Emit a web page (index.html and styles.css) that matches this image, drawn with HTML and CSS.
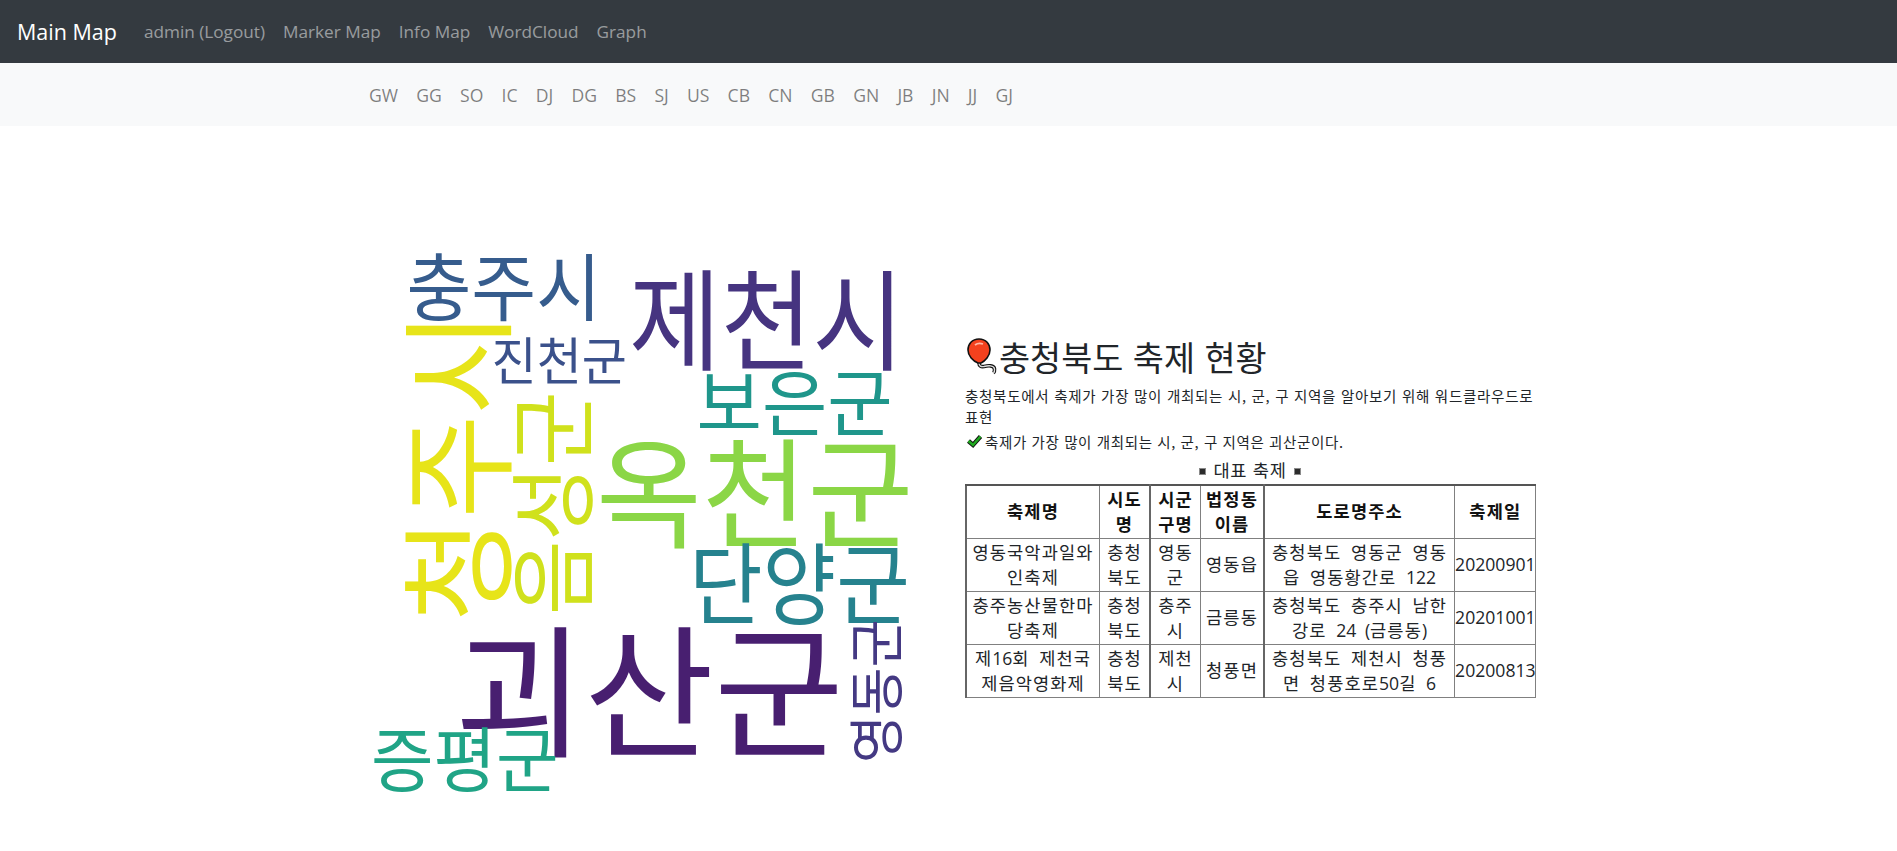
FILE: index.html
```html
<!DOCTYPE html>
<html lang="ko">
<head>
<meta charset="utf-8">
<title>WordCloud</title>
<link rel="stylesheet" href="styles.css">
</head>
<body>
<nav class="topbar">
  <a class="brand" href="#">Main Map</a>
  <a class="toplink" href="#">admin (Logout)</a>
  <a class="toplink" href="#">Marker Map</a>
  <a class="toplink" href="#">Info Map</a>
  <a class="toplink" href="#">WordCloud</a>
  <a class="toplink" href="#">Graph</a>
</nav>
<nav class="subbar">
  <a href="#">GW</a><a href="#">GG</a><a href="#">SO</a><a href="#">IC</a><a href="#">DJ</a><a href="#">DG</a><a href="#">BS</a><a href="#">SJ</a><a href="#">US</a><a href="#">CB</a><a href="#">CN</a><a href="#">GB</a><a href="#">GN</a><a href="#">JB</a><a href="#">JN</a><a href="#">JJ</a><a href="#">GJ</a>
</nav>
<main class="content">
  <svg class="cloud" viewBox="360 196 600 640" width="600" height="640" role="img" aria-label="word cloud">
    <text class="w" fill="#365c8d" transform="translate(406.5 315) scale(.705 .74)">충주시</text>
    <text class="w" fill="#463480" transform="translate(629 362) scale(.997 1.1)">제천시</text>
    <text class="w" fill="#3b518b" transform="translate(491.6 379.5) scale(.49 .51)">진천군</text>
    <text class="w" fill="#1f968b" transform="translate(696.6 430) scale(.71 .73)">보은군</text>
    <text class="w" fill="#8bd646" transform="translate(596 539) scale(1.15 1.2)">옥천군</text>
    <text class="w" fill="#26828e" transform="translate(689 617) scale(.8 .89)">단양군</text>
    <text class="w" fill="#481f70" transform="translate(454.5 746) scale(1.41 1.43)">괴산군</text>
    <text class="w" fill="#20a486" transform="translate(371 786) scale(.68 .71)">증평군</text>
    <text class="w" fill="#e7e419" transform="translate(502 622) rotate(-90) scale(1.126 1.16)">청주시</text>
    <text class="w" fill="#d0e11c" transform="translate(585.5 615) rotate(-90) scale(.81 .87)">음성군</text>
    <text class="w" fill="#443983" transform="translate(897 763) rotate(-90) scale(.52 .56)">영동군</text>
  </svg>
  <section class="info">
    <h2 class="title">
      <svg class="balloon" viewBox="5 7 36 44" width="36" height="44" aria-hidden="true">
        <path d="M19 35C19 38 21 39 24 38.5C28 37.5 34 37 34.5 41C34.7 43 34 44.5 33.5 45" fill="none" stroke="#111" stroke-width="3.6"/>
        <path d="M19 35C19 38 21 39 24 38.5C28 37.5 34 37 34.5 41C34.7 43 34 44.5 33.5 45" fill="none" stroke="#ddd" stroke-width="1.4"/>
        <path d="M19 11C26 11 30 16 30 22C30 28 25 33 21 35L18 35C13 33 8 28 8 22C8 16 12 11 19 11Z" fill="#f4411e" stroke="#111" stroke-width="1.6"/>
        <path d="M15 17C17 15.500 20 15 23 16" fill="none" stroke="#ffb6a4" stroke-width="1.8"/>
      </svg>충청북도 축제 현황
    </h2>
    <p class="desc">충청북도에서 축제가 가장 많이 개최되는 시, 군, 구 지역을 알아보기 위해 워드클라우드로 표현</p>
    <p class="result">
      <svg class="check" viewBox="5 6 18 15" width="18" height="15" aria-hidden="true">
        <path d="M8.500 13L13 17L20.500 8.500" fill="none" stroke="#111" stroke-width="4.4"/>
        <path d="M8.500 13L13 17L20.500 8.500" fill="none" stroke="#1fa81f" stroke-width="2.6"/>
      </svg>축제가 가장 많이 개최되는 시, 군, 구 지역은 괴산군이다.
    </p>
    <h3 class="subtitle"><span class="sq"></span>대표 축제<span class="sq"></span></h3>
    <table class="fest">
      <colgroup>
        <col class="c1"><col class="c2"><col class="c3"><col class="c4"><col class="c5"><col class="c6">
      </colgroup>
      <thead>
        <tr><th>축제명</th><th>시도명</th><th>시군구명</th><th>법정동이름</th><th>도로명주소</th><th>축제일</th></tr>
      </thead>
      <tbody>
        <tr><td>영동국악과일와인축제</td><td>충청북도</td><td>영동군</td><td>영동읍</td><td>충청북도 영동군 영동<br>읍 영동황간로 <span class="num">122</span></td><td><span class="num">20200901</span></td></tr>
        <tr><td>충주농산물한마당축제</td><td>충청북도</td><td>충주시</td><td>금릉동</td><td>충청북도 충주시 남한<br>강로 <span class="num">24 (</span>금릉동<span class="num">)</span></td><td><span class="num">20201001</span></td></tr>
        <tr><td>제<span class="num">16</span>회 제천국<br>제음악영화제</td><td>충청북도</td><td>제천시</td><td>청풍면</td><td>충청북도 제천시 청풍<br>면 청풍호로<span class="num">50</span>길 <span class="num">6</span></td><td><span class="num">20200813</span></td></tr>
      </tbody>
    </table>
  </section>
</main>
</body>
</html>
```
FILE: styles.css
```css
* { box-sizing: border-box; }
html, body { margin: 0; padding: 0; }
body {
  font-family: "Open Sans", "Noto Sans CJK KR", sans-serif;
  color: #212529;
  background: #fff;
  overflow: hidden;
}
a { text-decoration: none; }

.topbar {
  height: 63px;
  background: #343a40;
  display: flex;
  align-items: center;
  padding: 0 17px;
}
.brand { color: #fff; font-size: 21.5px; margin-right: 27px; }
.toplink { color: rgba(255,255,255,.5); font-size: 17.2px; margin-right: 18px; }

.subbar {
  height: 63px;
  background: #f8f9fa;
  display: flex;
  align-items: center;
  gap: 18.2px;
  padding-left: 369px;
}
.subbar a { color: rgba(0,0,0,.5); font-size: 17.6px; }

.content {
  display: grid;
  grid-template-columns: 605px 570px;
  align-items: center;
  padding: 70px 0 0 360px;
}
.cloud { display: block; }
.w {
  font-family: "Noto Sans CJK KR", sans-serif;
  font-size: 100px;
}

.title {
  margin: 0;
  font-family: "Noto Sans CJK KR", sans-serif;
  font-size: 33.8px;
  font-weight: 400;
  line-height: 44px;
  display: flex;
  align-items: center;
}
.balloon { flex: none; margin-right: -2px; }
.desc {
  margin: 6.5px 0 0;
  font-family: "Noto Sans CJK KR", sans-serif;
  font-size: 14.5px;
  letter-spacing: .72px;
  line-height: 21px;
}
.result {
  margin: 4px 0 0;
  font-family: "Noto Sans CJK KR", sans-serif;
  font-size: 14.5px;
  letter-spacing: .62px;
  line-height: 21px;
  display: flex;
  align-items: center;
}
.check { margin-right: 2px; flex: none; }
.subtitle {
  margin: 5px 0 1px;
  font-family: "Noto Sans CJK KR", sans-serif;
  font-size: 17.6px;
  font-weight: 400;
  letter-spacing: .7px;
  line-height: 26px;
  text-align: center;
}
.sq {
  display: inline-block;
  width: 7px;
  height: 7px;
  margin: 0 7px;
  background: #2b2b2b;
  border: 1px solid #8a8a8a;
  vertical-align: 2px;
}

.fest {
  width: 570px;
  table-layout: fixed;
  border-collapse: collapse;
  border-top: 2px solid #555;
  border-left: 2px solid #666;
  border-right: 1px solid #808080;
  border-bottom: 1px solid #808080;
  font-family: "Open Sans", "Noto Sans CJK KR", sans-serif;
  font-size: 17.6px;
  letter-spacing: 1.1px;
  word-spacing: 4px;
  line-height: 25px;
  text-align: center;
  color: #212529;
}
.fest th, .fest td { border: 1px solid #808080; padding: 0; height: 53px; }
.fest th { font-weight: 700; color: #111; }
.fest th:nth-child(3), .fest td:nth-child(3),
.fest th:nth-child(5), .fest td:nth-child(5) { border-left: 2px solid #666; }
.num { letter-spacing: 0; }
.c1 { width: 133.5px; }
.c2 { width: 50.5px; }
.c3 { width: 50.5px; }
.c4 { width: 63.5px; }
.c5 { width: 190.6px; }
.c6 { width: 81.4px; }
```
